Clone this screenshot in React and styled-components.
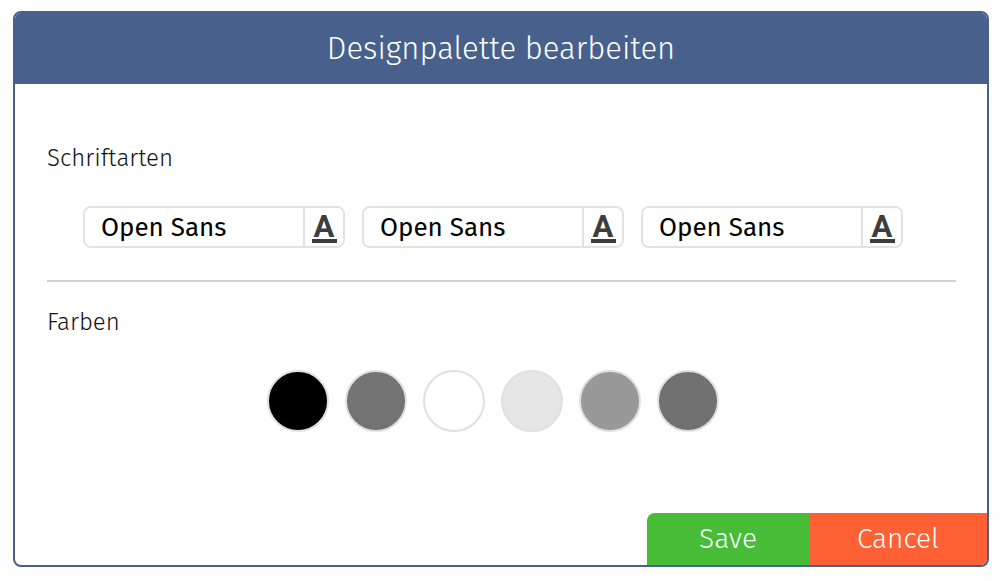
import React from 'react'
import styled, { createGlobalStyle } from 'styled-components'

const fonts = ['Open Sans', 'Open Sans', 'Open Sans']

const colors = ['#000000', '#737373', '#ffffff', '#e6e6e6', '#999999', '#717171']

function FontField({ label, value }) {
  return (
    <Field>
      <FontName type="text" aria-label={label} defaultValue={value} />
      <FontButton type="button" aria-label={`${label} ändern`}>
        <Letter>A</Letter>
      </FontButton>
    </Field>
  )
}

export default function App() {
  return (
    <>
      <GlobalStyle />
      <Modal role="dialog" aria-labelledby="palette-title">
        <Header>
          <Title id="palette-title">Designpalette bearbeiten</Title>
        </Header>

        <Body>
          <Label>Schriftarten</Label>
          <FontRow>
            {fonts.map((font, i) => (
              <FontField key={i} label={`Schriftart ${i + 1}`} value={font} />
            ))}
          </FontRow>

          <Divider />

          <Label>Farben</Label>
          <ColorRow>
            {colors.map((color, i) => (
              <Swatch key={i} type="button" $color={color} aria-label={`Farbe ${i + 1}`} />
            ))}
          </ColorRow>
        </Body>

        <Footer>
          <SaveButton type="button">Save</SaveButton>
          <CancelButton type="button">Cancel</CancelButton>
        </Footer>
      </Modal>
    </>
  )
}

const GlobalStyle = createGlobalStyle`
  * {
    box-sizing: border-box;
  }

  body {
    margin: 0;
    background: #fefefe;
    color: #111;
    font-family: "Fira Sans", "Open Sans", "Noto Sans", sans-serif;
    font-weight: 300;
  }

  button, input {
    font-family: inherit;
  }
`

const Modal = styled.div`
  margin: 11px 11px 15px 13px;
  background: #fff;
  border: 2px solid #48618c;
  border-radius: 8px;
  overflow: hidden;
`

const Header = styled.header`
  padding: 14px 16px 13px;
  background: #48618c;
  text-align: center;
`

const Title = styled.h1`
  margin: 0;
  color: #fff;
  font-size: 31px;
  font-weight: 300;
  line-height: 44px;
`

const Body = styled.main`
  padding: 56px 31px 81px 32px;
`

const Label = styled.h2`
  margin: 0;
  font-size: 24px;
  font-weight: 300;
  line-height: 36px;
`

const FontRow = styled.div`
  display: flex;
  flex-wrap: wrap;
  justify-content: center;
  gap: 17px;
  padding: 30px 17px 0 0;
`

const Field = styled.div`
  display: flex;
  width: 262px;
  height: 42px;
  border: 2px solid #e2e2e2;
  border-radius: 8px;
  overflow: hidden;
`

const FontName = styled.input`
  flex: 1;
  min-width: 0;
  padding: 0 16px;
  border: 0;
  background: #fff;
  color: #000;
  font-size: 26px;
  font-weight: 400;
`

const FontButton = styled.button`
  display: flex;
  align-items: center;
  justify-content: center;
  width: 40px;
  padding: 2px 0 0;
  border: 0;
  border-left: 2px solid #e2e2e2;
  background: #fff;
  cursor: pointer;
`

const Letter = styled.span`
  width: 25px;
  border-bottom: 4px solid #3d3d3d;
  color: #3d3d3d;
  font-family: Roboto, sans-serif;
  font-size: 31px;
  font-weight: 700;
  line-height: 25px;
  text-align: center;
`

const Divider = styled.hr`
  height: 2px;
  margin: 32px 0 22px;
  border: 0;
  background: #d0d0d0;
`

const ColorRow = styled.div`
  display: flex;
  flex-wrap: wrap;
  justify-content: center;
  gap: 16px;
  padding: 30px 17px 0 0;
`

const Swatch = styled.button`
  width: 62px;
  height: 62px;
  padding: 0;
  border: 2px solid #e0e0e0;
  border-radius: 50%;
  background: ${({ $color }) => $color};
  cursor: pointer;
`

const Footer = styled.footer`
  display: flex;
  justify-content: flex-end;
`

const ActionButton = styled.button`
  height: 52px;
  padding: 0 0 2px;
  border: 0;
  color: #fff;
  font-size: 28px;
  font-weight: 300;
  cursor: pointer;
`

const SaveButton = styled(ActionButton)`
  width: 162px;
  border-top-left-radius: 8px;
  background: #46bc37;
`

const CancelButton = styled(ActionButton)`
  width: 178px;
  background: #ff6034;
`
